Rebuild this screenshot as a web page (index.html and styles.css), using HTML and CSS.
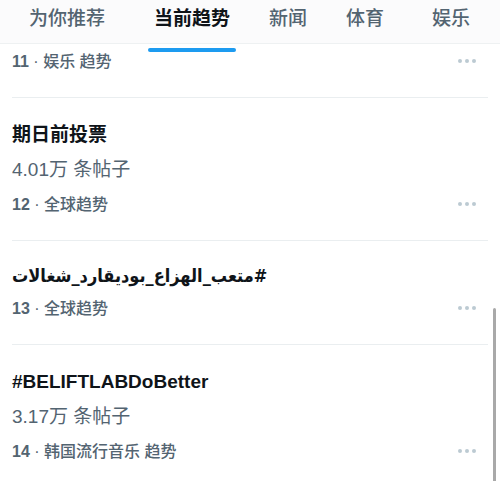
FILE: index.html
```html
<!DOCTYPE html>
<html>
<head>
    <title>趋势</title>
    <meta name="viewport" content="width=device-width, initial-scale=1.0">
    <link rel="stylesheet" href="styles.css">
</head>
<body>
    <div class="tabs">
        <div class="tab">为你推荐</div>
        <div class="tab active">当前趋势</div>
        <div class="tab">新闻</div>
        <div class="tab">体育</div>
        <div class="tab">娱乐</div>
    </div>

    <div class="trend-list">
        <div class="trend">
            <div class="trend-body">
                <div class="meta"><b>11</b> · 娱乐 趋势</div>
            </div>
            <div class="more"><span></span><span></span><span></span></div>
        </div>

        <div class="trend">
            <div class="trend-body">
                <div class="title">期日前投票</div>
                <div class="count">4.01万 条帖子</div>
                <div class="meta"><b>12</b> · 全球趋势</div>
            </div>
            <div class="more"><span></span><span></span><span></span></div>
        </div>

        <div class="trend">
            <div class="trend-body">
                <div class="title arabic" dir="rtl">#متعب_الهزاع_بوديقارد_شغالات</div>
                <div class="meta"><b>13</b> · 全球趋势</div>
            </div>
            <div class="more"><span></span><span></span><span></span></div>
        </div>

        <div class="trend">
            <div class="trend-body">
                <div class="title">#BELIFTLABDoBetter</div>
                <div class="count">3.17万 条帖子</div>
                <div class="meta"><b>14</b> · 韩国流行音乐 趋势</div>
            </div>
            <div class="more"><span></span><span></span><span></span></div>
        </div>
    </div>

    <div class="scrollbar"></div>
</body>
</html>
```

FILE: styles.css
```css
body {
    margin: 0;
    background-color: #ffffff;
    font-family: "Liberation Sans", "Noto Sans CJK SC", sans-serif;
    color: #0f1419;
    overflow: hidden;
}
.tabs {
    display: flex;
    height: 43px;
    padding-left: 29px;
    background-color: #fbfbfc;
    border-bottom: 1px solid #eef1f2;
}
.tab {
    position: relative;
    font-family: "Noto Sans CJK SC", sans-serif;
    font-size: 19px;
    font-weight: 500;
    line-height: 34px;
    color: #536471;
    white-space: nowrap;
}
.tab:nth-child(1) { margin-right: 49px; }
.tab:nth-child(2) { margin-right: 39px; }
.tab:nth-child(3) { margin-right: 39px; }
.tab:nth-child(4) { margin-right: 48px; }
.tab.active {
    color: #0f1419;
    font-weight: 700;
}
.tab.active::after {
    content: "";
    position: absolute;
    left: -6px;
    right: -6px;
    bottom: -9px;
    height: 4px;
    border-radius: 2px;
    background-color: #1d9bf0;
}
.trend-list {
    padding: 0 12px 0 12px;
}
.trend {
    display: flex;
    align-items: flex-end;
    border-bottom: 1px solid #eaeef0;
}
.trend-body {
    flex: 1;
    padding: 19px 0 18px 0;
}
.trend:first-child .trend-body {
    padding-top: 0;
}
.title {
    font-size: 19px;
    font-weight: 700;
    line-height: 35px;
}
.title.arabic {
    direction: rtl;
    display: inline-block;
    font-family: "DejaVu Sans Condensed", "DejaVu Sans", sans-serif;
    font-stretch: condensed;
    font-size: 18px;
    line-height: 31px;
}
.count {
    font-size: 19px;
    line-height: 35px;
    color: #536471;
}
.meta {
    font-size: 16px;
    font-weight: 500;
    line-height: 35px;
    color: #536471;
}
.meta b {
    font-weight: 700;
}
.more {
    display: flex;
    gap: 3px;
    padding: 0 12px 34px 0;
}
.more span {
    width: 4px;
    height: 4px;
    border-radius: 50%;
    background-color: #bccad2;
}
.scrollbar {
    position: absolute;
    right: 4px;
    top: 308px;
    width: 3px;
    height: 180px;
    border-radius: 2px;
    background-color: #a9a9a9;
}
```
